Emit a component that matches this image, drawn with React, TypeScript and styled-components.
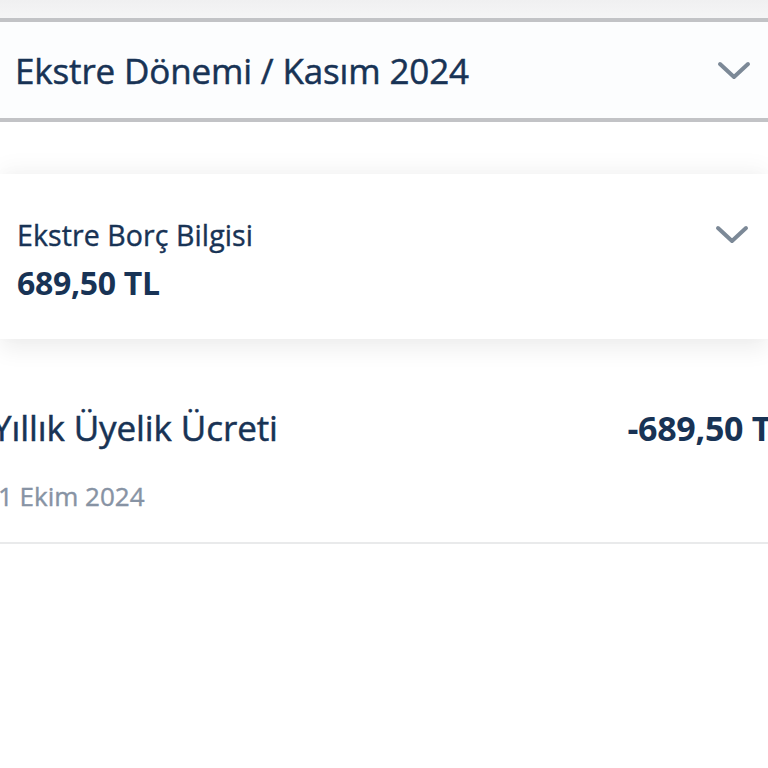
import styled, {createGlobalStyle} from 'styled-components';

const GlobalStyle = createGlobalStyle`
  html, body {
    margin: 0;
    padding: 0;
    background: #ffffff;
    overflow: hidden;
  }

  body {
    font-family: 'Open Sans', 'Noto Sans', sans-serif;
    color: #183355;
  }
`;

const Screen = styled.div`
  width: 768px;
  height: 768px;
  display: flex;
  flex-direction: column;
  background: #ffffff;
  overflow: hidden;
`;

const TopStrip = styled.div`
  height: 18px;
  flex-shrink: 0;
  background: linear-gradient(#f0f0f1, #f5f5f6);
`;

const PeriodBar = styled.div`
  height: 96px;
  flex-shrink: 0;
  display: flex;
  align-items: center;
  justify-content: space-between;
  padding: 0 17px 0 15px;
  background: #fcfdfe;
  border-top: 4px solid #c2c3c6;
  border-bottom: 4px solid #c2c3c6;
`;

// the screenshot's regular text is a touch heavier than Open Sans regular
const PeriodTitle = styled.span`
  font-size: 35px;
  color: #183355;
  letter-spacing: -0.15px;
  -webkit-text-stroke: 0.5px #183355;
`;

const Gap = styled.div<{$h: number}>`
  height: ${p => p.$h}px;
  flex-shrink: 0;
`;

const Card = styled.div`
  height: 165px;
  flex-shrink: 0;
  box-sizing: border-box;
  padding: 42px 19px 0 17px;
  display: flex;
  justify-content: space-between;
  align-items: flex-start;
  background: #ffffff;
  box-shadow:
    0 10px 22px rgba(0, 0, 0, 0.07),
    0 -8px 20px rgba(0, 0, 0, 0.035);
`;

const CardText = styled.div`
  display: flex;
  flex-direction: column;
  gap: 7px;
`;

const Label = styled.span`
  font-size: 28.5px;
  color: #183355;
  letter-spacing: 0.1px;
  -webkit-text-stroke: 0.4px #183355;
`;

const Amount = styled.span<{$size: number}>`
  font-size: ${p => p.$size}px;
  font-weight: 700;
  color: #183355;
  letter-spacing: -0.3px;
  white-space: nowrap;
`;

const ChevronBox = styled.div<{$top: number}>`
  display: flex;
  margin-top: ${p => p.$top}px;
`;

const TxRow = styled.div`
  height: 170px;
  flex-shrink: 0;
  box-sizing: border-box;
  margin: 0 -22px 0 -8px;
  padding-top: 30px;
  display: flex;
  flex-direction: column;
  gap: 27px;
  background: #ffffff;
  border-bottom: 2px solid #e9eaeb;
`;

const TxLine = styled.div`
  display: flex;
  justify-content: space-between;
  align-items: baseline;
`;

const TxName = styled.span`
  font-size: 35px;
  color: #183355;
  letter-spacing: -0.1px;
  -webkit-text-stroke: 0.5px #183355;
`;

const TxDate = styled.span`
  font-size: 26px;
  margin-left: 6px;
  color: #8793a4;
  -webkit-text-stroke: 0.4px #8793a4;
`;

const Chevron = () => (
  <svg width={34} height={19} viewBox="0 0 34 19" fill="none">
    <path
      d="M3 3 L17 16 L31 3"
      stroke="#7c8997"
      strokeWidth="4"
      strokeLinecap="round"
      strokeLinejoin="round"
    />
  </svg>
);

export default function App() {
  return (
    <Screen>
      <GlobalStyle />
      <TopStrip />
      <PeriodBar>
        <PeriodTitle>Ekstre Dönemi / Kasım 2024</PeriodTitle>
        <Chevron />
      </PeriodBar>
      <Gap $h={52} />
      <Card>
        <CardText>
          <Label>Ekstre Borç Bilgisi</Label>
          <Amount $size={32}>689,50 TL</Amount>
        </CardText>
        <ChevronBox $top={9}>
          <Chevron />
        </ChevronBox>
      </Card>
      <Gap $h={35} />
      <TxRow>
        <TxLine>
          <TxName>Yıllık Üyelik Ücreti</TxName>
          <Amount $size={34}>-689,50 TL</Amount>
        </TxLine>
        <TxDate>1 Ekim 2024</TxDate>
      </TxRow>
    </Screen>
  );
}
